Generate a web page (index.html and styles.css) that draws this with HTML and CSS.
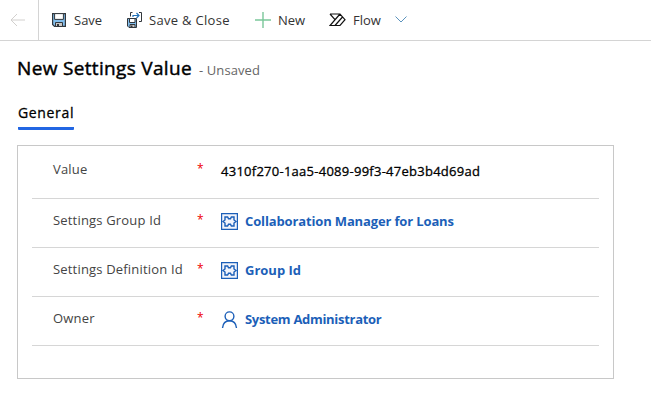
FILE: index.html
```html
<!DOCTYPE html>
<html lang="en">
<head>
<meta charset="utf-8">
<title>New Settings Value</title>
<link rel="stylesheet" href="styles.css">
</head>
<body>
<header class="toolbar">
  <div class="back"><svg width="16" height="14" viewBox="0 0 16 14" fill="none" stroke="#d2d0ce"><path d="M7 1L1 7l6 6M1 7h14"/></svg></div>
  <div class="command save">
    <svg width="14" height="14" viewBox="0 0 14 14"><path d="M.6.6h12.8v12.8H2.5L.6 11.5z" fill="#83beec" stroke="#32373c" stroke-width="1.2"/><path d="M2.6.6h8.8v5.8H2.6z" fill="#fff" stroke="#32373c"/><path d="M3.5 9.5h7v4h-7z" fill="#c8c6c4" stroke="#32373c"/><path d="M5 11h2v2.5H5z" fill="#32373c"/></svg>
    <span>Save</span>
  </div>
  <div class="command save-close">
    <svg width="15" height="17" viewBox="0 0 15 17" fill="none"><path d="M.5 6.500h9v9H2L.5 14z" fill="#83beec" stroke="#32373c"/><path d="M2.500 6.500h5.500v4H2.500z" fill="#fff" stroke="#32373c"/><path d="M3 12.500h5v3H3z" fill="#c8c6c4" stroke="#32373c"/><path d="M4 13.500h1.500v2H4z" fill="#32373c"/><path d="M5.500.5H3.500v4M12 .5h2.500v9H12" stroke="#32373c"/><path d="M6 5V3.500h5.500M9.500 1l2.500 2.500L9.500 6" stroke="#2272b9" stroke-width="1.2"/></svg>
    <span class="t-close">Save &amp; Close</span>
  </div>
  <div class="command new">
    <svg width="16" height="16" viewBox="0 0 16 16" stroke="#7bc79a" stroke-width="1.4"><path d="M8 0v16M0 8h16"/></svg>
    <span>New</span>
  </div>
  <div class="command flow">
    <svg width="17" height="14" viewBox="0 0 17 14" fill="none" stroke="#111" stroke-width="1.2"><path d="M1 1h10l5 5.700-5 5.800H1L11 1M1 1l5 5.700M6 12.500L13.500 4"/></svg>
    <span>Flow</span>
    <svg class="chevron" width="12" height="7" viewBox="0 0 12 7" fill="none" stroke="#5b93bd"><path d="M.5.5L6 6 11.500.5"/></svg>
  </div>
</header>
<main>
  <div class="heading"><h1>New Settings Value</h1><span class="status">- Unsaved</span></div>
  <nav><a class="tab">General</a></nav>
  <section class="panel">
    <div class="row first">
      <label>Value</label><span class="required">*</span>
      <span class="guid">4310f270-1aa5-4089-99f3-47eb3b4d69ad</span>
    </div>
    <div class="row">
      <label>Settings Group Id</label><span class="required">*</span>
      <svg class="icon" width="17" height="17" viewBox="0 0 17 17" fill="none" stroke="#1c5fb8"><path d="M.6.6h15.800v15.800H.6z" fill="#f2f4fb" stroke-width="1.200"/><path d="M4 4h2.600L7.500 5.700h2L10.400 4H13v3l2 1.500-2 1.500v3h-2.600L9.500 11.300h-2L6.600 13H4v-3L2 8.500 4 7z" stroke-width="1.400"/></svg>
      <a class="link t-collab">Collaboration Manager for Loans</a>
    </div>
    <div class="row">
      <label>Settings Definition Id</label><span class="required">*</span>
      <svg class="icon" width="17" height="17" viewBox="0 0 17 17" fill="none" stroke="#1c5fb8"><path d="M.6.6h15.800v15.800H.6z" fill="#f2f4fb" stroke-width="1.200"/><path d="M4 4h2.600L7.500 5.700h2L10.400 4H13v3l2 1.500-2 1.500v3h-2.600L9.500 11.300h-2L6.600 13H4v-3L2 8.500 4 7z" stroke-width="1.400"/></svg>
      <a class="link">Group Id</a>
    </div>
    <div class="row">
      <label>Owner</label><span class="required">*</span>
      <svg class="icon" width="17" height="17" viewBox="0 0 17 17" fill="none" stroke="#1c5fb8" stroke-width="1.400"><circle cx="8.500" cy="5.300" r="4.400"/><path d="M1.500 17c.4-4.500 3-7.300 7-7.300s6.600 2.800 7 7.300"/></svg>
      <a class="link t-admin">System Administrator</a>
    </div>
  </section>
</main>
</body>
</html>
```
FILE: styles.css
```css
* { box-sizing: border-box; }
body { margin: 0; background: #fff; color: #333; font: 13px/20px "Open Sans", "Noto Sans", sans-serif; overflow: hidden; }
svg { display: block; flex: none; }
span, a, label, h1 { white-space: nowrap; }
.toolbar { display: flex; height: 41px; border-bottom: 1px solid #d4d4d4; }
.back { width: 39px; border-right: 1px solid #d4d4d4; padding: 13px 0 0 10px; }
.command { display: flex; align-items: center; height: 40px; }
.save { width: 88px; padding-left: 13px; gap: 8px; }
.save-close { width: 128px; gap: 7px; }
.t-close { letter-spacing: .3px; }
.new { width: 74px; gap: 7px; }
.flow { gap: 7px; }
.chevron { margin-left: 7px; margin-top: -2px; }
main { padding: 13px 37px 0 17px; }
.heading { display: flex; height: 28px; align-items: baseline; gap: 7px; }
h1 { margin: 0; color: #000; font-size: 19px; line-height: 28px; font-weight: 400; letter-spacing: .33px; -webkit-text-stroke: .45px #000; }
.status { color: #666; letter-spacing: .1px; }
nav { display: flex; height: 63px; padding-top: 21px; align-items: flex-start; }
.tab { width: 56px; height: 27px; margin-left: 1px; color: #000; font-size: 14px; letter-spacing: .65px; -webkit-text-stroke: .3px #000; border-bottom: 3px solid #2266e3; border-radius: 1px; }
.panel { height: 234px; border: 1px solid #c8c8c8; padding: 0 14px; }
.row { display: flex; align-items: center; height: 49px; padding: 0 0 6px 21px; border-bottom: 1px solid #d6d6d6; }
.first { height: 53px; }
.row label { width: 144px; flex: none; color: #444; letter-spacing: .18px; }
.required { width: 24px; color: #e00; font-size: 12px; }
.icon { margin-top: 2px; }
.guid { color: #000; letter-spacing: .26px; -webkit-text-stroke: .3px #000; padding-top: 4px; }
.link { color: #1c5fb8; font-weight: 700; margin-left: 7px; padding-top: 2px; }
.t-collab { letter-spacing: -.14px; }
.t-admin { letter-spacing: -.3px; }
```
